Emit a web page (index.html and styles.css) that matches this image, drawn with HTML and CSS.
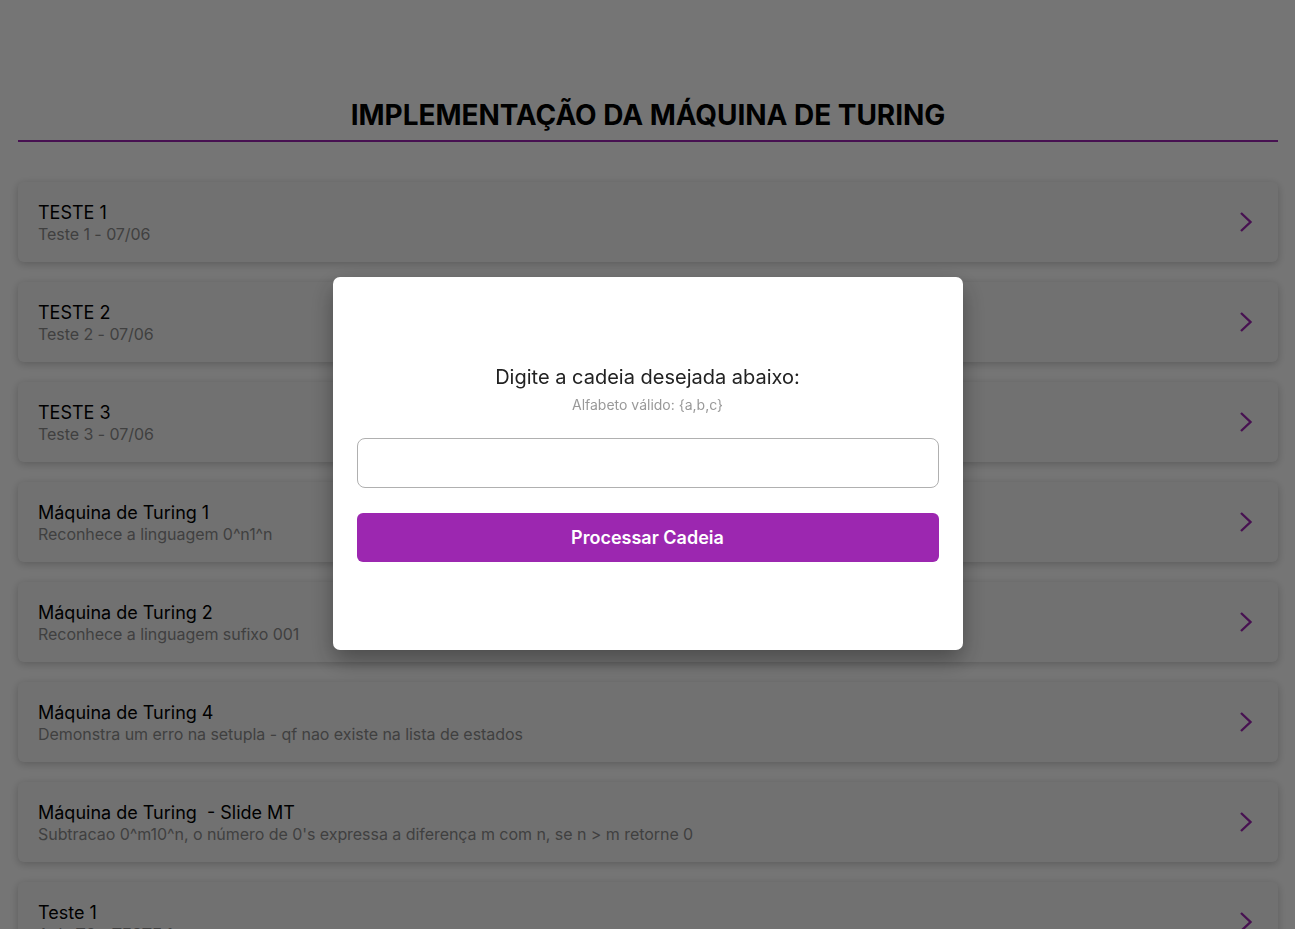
FILE: index.html
```html
<!DOCTYPE html>
<html lang="pt">
<head>
<meta charset="utf-8">
<title>Máquina de Turing</title>
<link rel="stylesheet" href="styles.css">
</head>
<body>
<main class="page">
  <header class="header">
    <h1 class="title">IMPLEMENTAÇÃO DA MÁQUINA DE TURING</h1>
  </header>
  <ul class="list">
    <li class="card"><div class="card-text"><div class="card-title">TESTE 1</div><div class="card-sub">Teste 1 - 07/06</div></div><svg class="chev" viewBox="0 0 14 22"><polyline points="2,2 11.5,11 2,20"/></svg></li>
    <li class="card"><div class="card-text"><div class="card-title">TESTE 2</div><div class="card-sub">Teste 2 - 07/06</div></div><svg class="chev" viewBox="0 0 14 22"><polyline points="2,2 11.5,11 2,20"/></svg></li>
    <li class="card"><div class="card-text"><div class="card-title">TESTE 3</div><div class="card-sub">Teste 3 - 07/06</div></div><svg class="chev" viewBox="0 0 14 22"><polyline points="2,2 11.5,11 2,20"/></svg></li>
    <li class="card"><div class="card-text"><div class="card-title">Máquina de Turing 1</div><div class="card-sub">Reconhece a linguagem 0^n1^n</div></div><svg class="chev" viewBox="0 0 14 22"><polyline points="2,2 11.5,11 2,20"/></svg></li>
    <li class="card"><div class="card-text"><div class="card-title">Máquina de Turing 2</div><div class="card-sub">Reconhece a linguagem sufixo 001</div></div><svg class="chev" viewBox="0 0 14 22"><polyline points="2,2 11.5,11 2,20"/></svg></li>
    <li class="card"><div class="card-text"><div class="card-title">Máquina de Turing 4</div><div class="card-sub">Demonstra um erro na setupla - qf nao existe na lista de estados</div></div><svg class="chev" viewBox="0 0 14 22"><polyline points="2,2 11.5,11 2,20"/></svg></li>
    <li class="card"><div class="card-text"><div class="card-title">Máquina de Turing &nbsp;- Slide MT</div><div class="card-sub">Subtracao 0^m10^n, o número de 0's expressa a diferença m com n, se n &gt; m retorne 0</div></div><svg class="chev" viewBox="0 0 14 22"><polyline points="2,2 11.5,11 2,20"/></svg></li>
    <li class="card"><div class="card-text"><div class="card-title">Teste 1</div><div class="card-sub">Aula T2 - TESTE 1</div></div><svg class="chev" viewBox="0 0 14 22"><polyline points="2,2 11.5,11 2,20"/></svg></li>
  </ul>
</main>
<div class="backdrop"></div>
<div class="modal-wrap">
  <div class="modal">
    <p class="modal-title">Digite a cadeia desejada abaixo:</p>
    <p class="modal-hint">Alfabeto válido: {a,b,c}</p>
    <input class="modal-input" type="text" aria-label="cadeia">
    <button class="modal-btn" type="button">Processar Cadeia</button>
  </div>
</div>
</body>
</html>
```
FILE: styles.css
```css
* { box-sizing: border-box; }
html, body { margin: 0; height: 100%; overflow: hidden; }
body {
  background: #ffffff;
  font-family: Inter, "Noto Sans", sans-serif;
  color: #000;
}
.page { padding: 0 17px 0 18px; }
.header {
  padding-top: 97px;
  border-bottom: 2px solid #9c27b0;
  text-align: center;
}
.title {
  margin: 0;
  padding-bottom: 7px;
  font-size: 28px;
  font-weight: 700;
  line-height: 36px;
  letter-spacing: -0.05px;
}
.list {
  list-style: none;
  margin: 40px 0 0;
  padding: 0;
  display: flex;
  flex-direction: column;
  gap: 20px;
}
.card {
  height: 80px;
  background: #f7f7f7;
  border-radius: 6px;
  box-shadow: 0 2px 8px rgba(0,0,0,0.22);
  display: flex;
  align-items: center;
  padding: 0 25px 0 20px;
}
.card-text { flex: 1; padding-top: 1px; }
.card-title { font-size: 18px; line-height: 22px; color: #000; }
.card-sub { margin-top: 0; font-size: 16px; line-height: 20px; color: #8c8c8c; letter-spacing: -0.05px; }
.chev { width: 14px; height: 22px; fill: none; stroke: #9c27b0; stroke-width: 2.4; }
.backdrop {
  position: fixed; inset: 0;
  background: rgba(0,0,0,0.54);
}
.modal-wrap {
  position: fixed; inset: 0;
  display: flex; align-items: center; justify-content: center;
  padding-bottom: 2px;
}
.modal {
  width: 630px; height: 373px;
  background: #fff;
  border-radius: 7px;
  box-shadow: 0 10px 25px rgba(0,0,0,0.35);
  display: flex; flex-direction: column; justify-content: center;
  padding: 0 24px;
  text-align: center;
}
.modal-title { margin: 0; font-size: 20px; line-height: 24px; color: #222; }
.modal-hint { margin: 7px 0 0; font-size: 14px; line-height: 18px; color: #999; }
.modal-input {
  margin-top: 24px;
  height: 50px; width: 100%; flex: none;
  border: 1px solid #b0b0b0; border-radius: 8px;
  font: inherit; padding: 0 12px;
}
.modal-btn {
  margin-top: 25px;
  height: 49px; width: 100%; flex: none;
  border: 0; border-radius: 6px;
  background: #9c27b0; color: #fff;
  font: 600 18px Inter, sans-serif;
}
```
